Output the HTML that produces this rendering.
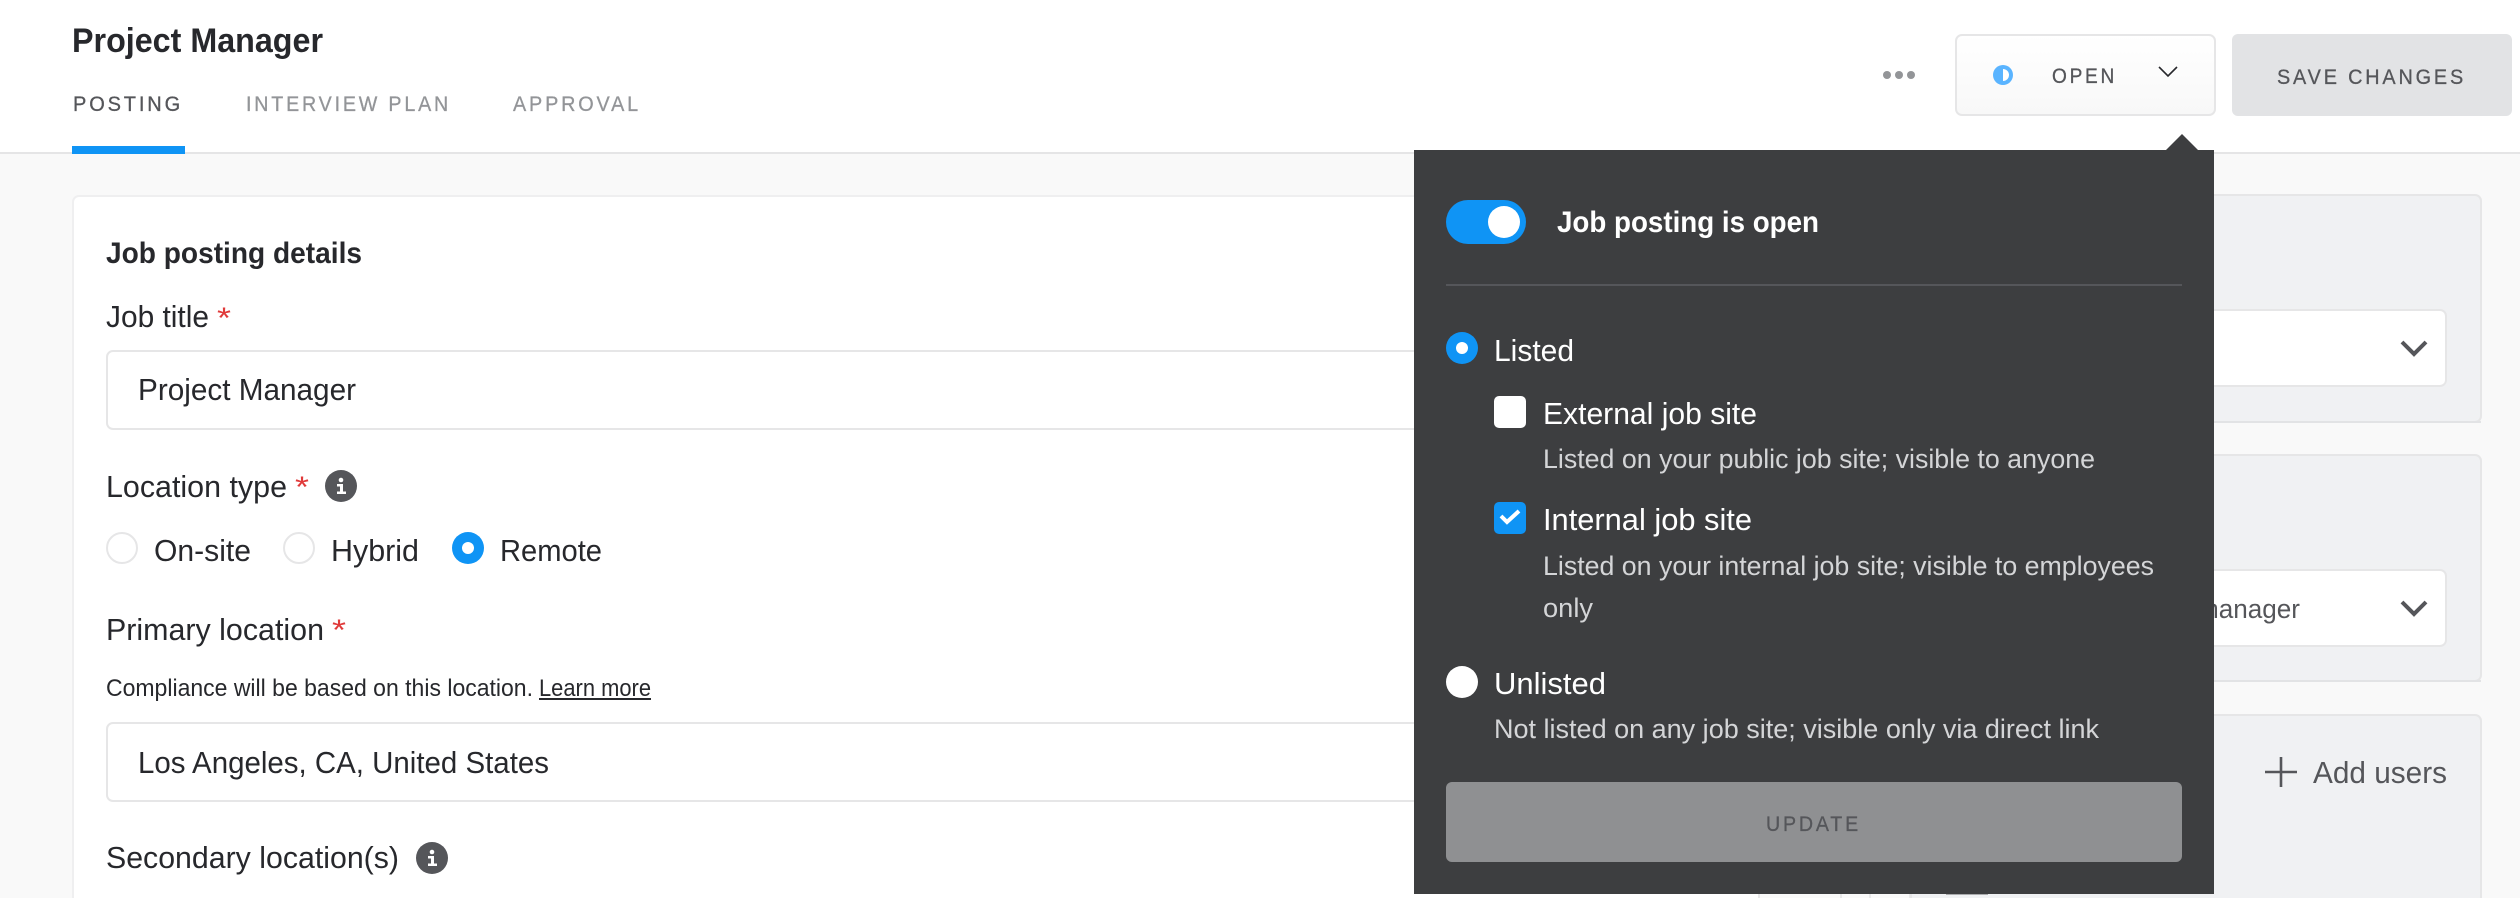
<!DOCTYPE html>
<html>
<head>
<meta charset="utf-8">
<title>Project Manager</title>
<style>
html,body{margin:0;padding:0;width:2520px;height:898px;overflow:hidden;background:#f9f9f9}
svg{display:block}
text{font-family:"Liberation Sans",sans-serif;white-space:pre}
.d{fill:#27282c}
.l{font-size:31px;fill:#27282c}
.b{font-weight:700}
.t{font-size:21px;letter-spacing:3px;stroke-width:.3px}
.w{font-size:31px;fill:#fff}
.s{font-size:27px;fill:#d4d5d7}
.r{font-size:30px;fill:#e03a3a}
</style>
</head>
<body>
<svg width="2520" height="898" viewBox="0 0 2520 898" xmlns="http://www.w3.org/2000/svg">
<rect width="2520" height="898" fill="#f9f9f9"/>
<!-- header -->
<rect width="2520" height="152" fill="#fff"/>
<rect y="152" width="2520" height="2" fill="#e5e5e6"/>
<rect x="72" y="146" width="113" height="8" fill="#0f94f5"/>
<text x="72" y="52" class="d b" font-size="34" textLength="251" lengthAdjust="spacingAndGlyphs">Project Manager</text>
<text x="73" y="111" class="t" fill="#55565a" stroke="#55565a" textLength="110" lengthAdjust="spacingAndGlyphs">POSTING</text>
<text x="246" y="111" class="t" fill="#939598" stroke="#939598" textLength="205" lengthAdjust="spacingAndGlyphs">INTERVIEW PLAN</text>
<text x="513" y="111" class="t" fill="#939598" stroke="#939598" textLength="128" lengthAdjust="spacingAndGlyphs">APPROVAL</text>
<!-- dots -->
<circle cx="1887" cy="75" r="4" fill="#939598"/><circle cx="1899" cy="75" r="4" fill="#939598"/><circle cx="1911" cy="75" r="4" fill="#939598"/>
<!-- open btn -->
<defs><linearGradient id="g" x1="0" y1="0" x2="0" y2="1"><stop offset="0" stop-color="#fff"/><stop offset="1" stop-color="#f8f8f8"/></linearGradient></defs>
<rect x="1956" y="35" width="259" height="80" rx="6" fill="url(#g)" stroke="#e6e6e7" stroke-width="2"/>
<circle cx="2003" cy="75" r="10" fill="#5ab4ff"/>
<path d="M2003 69a6 6 0 0 1 0 12z" fill="#fff"/>
<text x="2052" y="83" class="t" fill="#55565a" stroke="#55565a" textLength="65" lengthAdjust="spacingAndGlyphs">OPEN</text>
<path d="M2159 67l9 9 9-9" fill="none" stroke="#27282c" stroke-width="1.6"/>
<rect x="2232" y="34" width="280" height="82" rx="6" fill="#e2e3e5"/>
<text x="2277" y="84" class="t" fill="#55565a" stroke="#55565a" textLength="189" lengthAdjust="spacingAndGlyphs">SAVE CHANGES</text>
<!-- main card -->
<rect x="73" y="196" width="1840" height="720" rx="6" fill="#fff" stroke="#efeff0" stroke-width="2"/>
<text x="106" y="263" class="d b" font-size="30" textLength="256" lengthAdjust="spacingAndGlyphs">Job posting details</text>
<text x="106" y="327" class="l" textLength="103" lengthAdjust="spacingAndGlyphs">Job title</text>
<text x="217" y="328" class="r" textLength="14" lengthAdjust="spacingAndGlyphs">*</text>
<rect x="107" y="351" width="1600" height="78" rx="6" fill="#fff" stroke="#e6e6e7" stroke-width="2"/>
<text x="138" y="400" class="l" textLength="218" lengthAdjust="spacingAndGlyphs">Project Manager</text>
<text x="106" y="497" class="l" textLength="181" lengthAdjust="spacingAndGlyphs">Location type</text>
<text x="295" y="497" class="r" textLength="14" lengthAdjust="spacingAndGlyphs">*</text>
<circle cx="341" cy="486" r="16" fill="#55565a"/>
<circle cx="341" cy="480" r="2.3" fill="#fff"/>
<path d="M337 484h6v7.5h3v2.5h-9v-2.5h3v-5h-3z" fill="#fff"/>
<circle cx="122" cy="548" r="15" fill="#fff" stroke="#e6e6e7" stroke-width="2"/>
<text x="154" y="561" class="l" textLength="97" lengthAdjust="spacingAndGlyphs">On-site</text>
<circle cx="299" cy="548" r="15" fill="#fff" stroke="#e6e6e7" stroke-width="2"/>
<text x="331" y="561" class="l" textLength="88" lengthAdjust="spacingAndGlyphs">Hybrid</text>
<circle cx="468" cy="548" r="16" fill="#0f94f5"/><circle cx="468" cy="548" r="6" fill="#fff"/>
<text x="500" y="561" class="l" textLength="102" lengthAdjust="spacingAndGlyphs">Remote</text>
<text x="106" y="640" class="l" textLength="218" lengthAdjust="spacingAndGlyphs">Primary location</text>
<text x="332" y="640" class="r" textLength="14" lengthAdjust="spacingAndGlyphs">*</text>
<text x="106" y="696" class="d" font-size="24" textLength="427" lengthAdjust="spacingAndGlyphs">Compliance will be based on this location.</text>
<text x="539" y="696" class="d" font-size="24" textLength="112" lengthAdjust="spacingAndGlyphs">Learn more</text>
<rect x="539" y="698" width="112" height="2" fill="#27282c"/>
<rect x="107" y="723" width="1600" height="78" rx="6" fill="#fff" stroke="#e6e6e7" stroke-width="2"/>
<text x="138" y="773" class="l" textLength="411" lengthAdjust="spacingAndGlyphs">Los Angeles, CA, United States</text>
<text x="106" y="868" class="l" textLength="293" lengthAdjust="spacingAndGlyphs">Secondary location(s)</text>
<circle cx="432" cy="858" r="16" fill="#55565a"/>
<circle cx="432" cy="852" r="2.3" fill="#fff"/>
<path d="M428 856h6v7.5h3v2.5h-9v-2.5h3v-5h-3z" fill="#fff"/>
<!-- bottom fragments below popover -->
<rect x="1758" y="893" width="2" height="5" fill="#e9e9ea"/>
<rect x="1760" y="893" width="151" height="5" fill="#fafafa"/>
<rect x="1840" y="893" width="2" height="5" fill="#e9e9ea"/>
<rect x="1869" y="893" width="2" height="5" fill="#e9e9ea"/>
<rect x="1909" y="893" width="2" height="5" fill="#e9e9ea"/>
<!-- right panels -->
<rect x="1905" y="195" width="576" height="227" rx="6" fill="#f0f1f3" stroke="#e6e6e7" stroke-width="2"/>
<rect x="1905" y="421" width="576" height="2" fill="#e2e3e5"/>
<rect x="1905" y="310" width="541" height="76" rx="6" fill="#fff" stroke="#e6e6e7" stroke-width="2"/>
<path d="M2402 342l12 12 12-12" fill="none" stroke="#55565a" stroke-width="4"/>
<rect x="1905" y="455" width="576" height="226" rx="6" fill="#f0f1f3" stroke="#e6e6e7" stroke-width="2"/>
<rect x="1905" y="680" width="576" height="2" fill="#e2e3e5"/>
<rect x="1905" y="570" width="541" height="76" rx="6" fill="#fff" stroke="#e6e6e7" stroke-width="2"/>
<text x="2300" y="618" text-anchor="end" font-size="27" fill="#55565a" textLength="103" lengthAdjust="spacingAndGlyphs">manager</text>
<path d="M2402 602l12 12 12-12" fill="none" stroke="#55565a" stroke-width="4"/>
<rect x="1911" y="715" width="570" height="220" rx="6" fill="#f0f1f3" stroke="#e6e6e7" stroke-width="2"/>
<rect x="1946" y="893" width="42" height="2" fill="#aaabad"/>
<path d="M2265 772h32M2281 757v30" fill="none" stroke="#55565a" stroke-width="2.6"/>
<text x="2313" y="783" font-size="31" fill="#55565a" textLength="134" lengthAdjust="spacingAndGlyphs">Add users</text>
<!-- popover -->
<path d="M2166 150L2182 134L2198 150z" fill="#3d3e40"/>
<rect x="1414" y="150" width="800" height="744" fill="#3d3e40"/>
<rect x="1446" y="200" width="80" height="44" rx="22" fill="#0f94f5"/>
<circle cx="1504" cy="222" r="16" fill="#fff"/>
<text x="1557" y="232" class="b" font-size="30" fill="#fff" textLength="262" lengthAdjust="spacingAndGlyphs">Job posting is open</text>
<rect x="1446" y="284" width="736" height="2" fill="#55565a"/>
<circle cx="1462" cy="348" r="16" fill="#0f94f5"/><circle cx="1462" cy="348" r="6" fill="#fff"/>
<text x="1494" y="361" class="w" textLength="80" lengthAdjust="spacingAndGlyphs">Listed</text>
<rect x="1494" y="396" width="32" height="32" rx="5" fill="#fff"/>
<text x="1543" y="424" class="w" textLength="214" lengthAdjust="spacingAndGlyphs">External job site</text>
<text x="1543" y="468" class="s" textLength="552" lengthAdjust="spacingAndGlyphs">Listed on your public job site; visible to anyone</text>
<rect x="1494" y="502" width="32" height="32" rx="5" fill="#0f94f5"/>
<path d="M1501 516l6 6 12-11" fill="none" stroke="#fff" stroke-width="4"/>
<text x="1543" y="530" class="w" textLength="209" lengthAdjust="spacingAndGlyphs">Internal job site</text>
<text x="1543" y="575" class="s" textLength="611" lengthAdjust="spacingAndGlyphs">Listed on your internal job site; visible to employees</text>
<text x="1543" y="617" class="s" textLength="50" lengthAdjust="spacingAndGlyphs">only</text>
<circle cx="1462" cy="682" r="16" fill="#fff"/>
<text x="1494" y="694" class="w" textLength="112" lengthAdjust="spacingAndGlyphs">Unlisted</text>
<text x="1494" y="738" class="s" textLength="605" lengthAdjust="spacingAndGlyphs">Not listed on any job site; visible only via direct link</text>
<rect x="1446" y="782" width="736" height="80" rx="6" fill="#8f9092"/>
<text x="1766" y="831" font-size="21" letter-spacing="3" fill="#55565a" stroke="#55565a" stroke-width=".3" textLength="95" lengthAdjust="spacingAndGlyphs">UPDATE</text>
</svg>
</body>
</html>
